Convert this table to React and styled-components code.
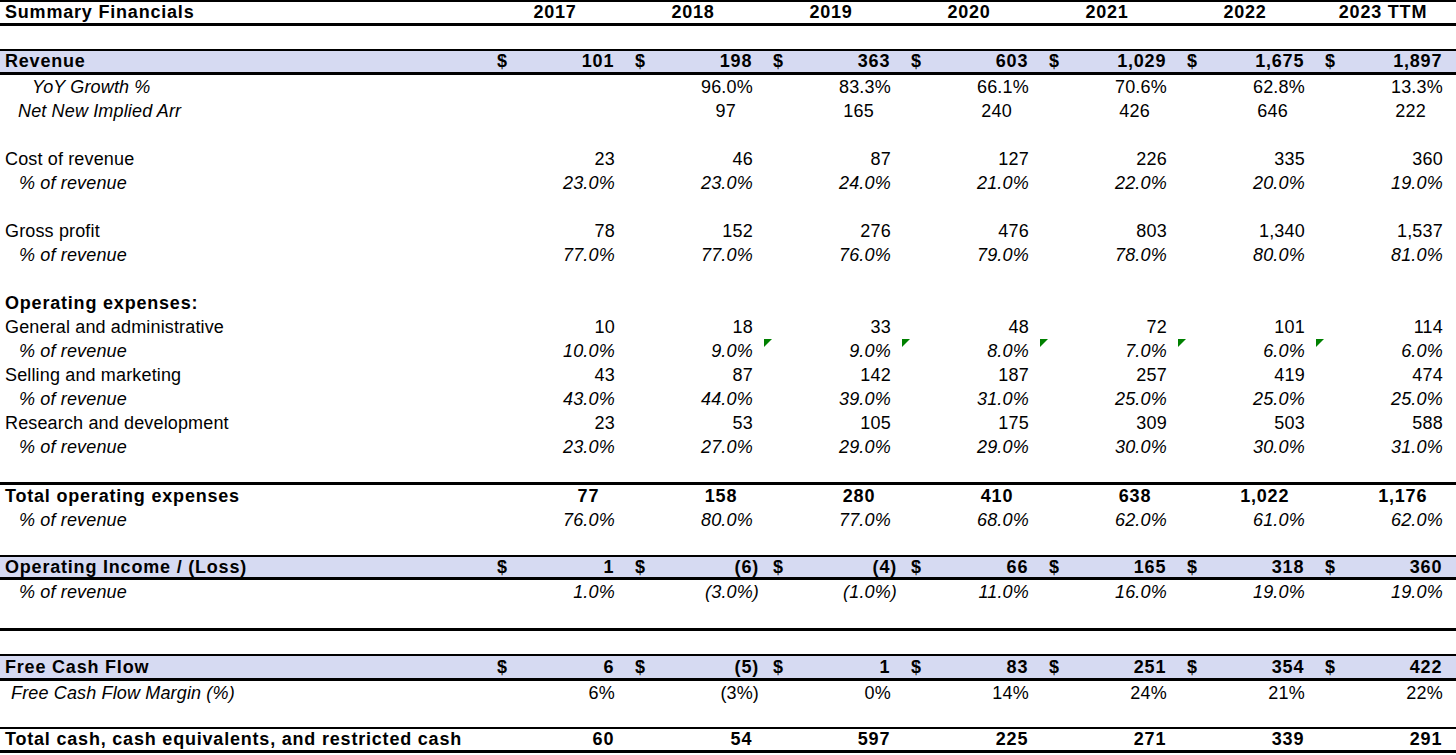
import React from 'react'
import styled, { createGlobalStyle } from 'styled-components'

const years = ['2017', '2018', '2019', '2020', '2021', '2022', '2023 TTM']

// one entry per spreadsheet row; h = row height, top/bottom = border widths
const rows = [
  { type: 'head', h: 26, top: 2, bottom: 3 },
  { type: 'blank', h: 23 },
  { label: 'Revenue', bold: true, band: true, dollar: true, h: 26, top: 2, bottom: 3,
    values: ['101', '198', '363', '603', '1,029', '1,675', '1,897'] },
  { label: 'YoY Growth %', italic: true, indent: 27,
    values: ['', '96.0%', '83.3%', '66.1%', '70.6%', '62.8%', '13.3%'] },
  { label: 'Net New Implied Arr', italic: true, indent: 13, inset: 20,
    values: ['', '97', '165', '240', '426', '646', '222'] },
  { type: 'blank' },
  { label: 'Cost of revenue', values: ['23', '46', '87', '127', '226', '335', '360'] },
  { label: '% of revenue', italic: true, indent: 14, italicValues: true,
    values: ['23.0%', '23.0%', '24.0%', '21.0%', '22.0%', '20.0%', '19.0%'] },
  { type: 'blank' },
  { label: 'Gross profit', values: ['78', '152', '276', '476', '803', '1,340', '1,537'] },
  { label: '% of revenue', italic: true, indent: 14, italicValues: true,
    values: ['77.0%', '77.0%', '76.0%', '79.0%', '78.0%', '80.0%', '81.0%'] },
  { type: 'blank' },
  { label: 'Operating expenses:', bold: true, values: [] },
  { label: 'General and administrative', values: ['10', '18', '33', '48', '72', '101', '114'] },
  { label: '% of revenue', italic: true, indent: 14, italicValues: true, flags: [2, 3, 4, 5, 6],
    values: ['10.0%', '9.0%', '9.0%', '8.0%', '7.0%', '6.0%', '6.0%'] },
  { label: 'Selling and marketing', values: ['43', '87', '142', '187', '257', '419', '474'] },
  { label: '% of revenue', italic: true, indent: 14, italicValues: true,
    values: ['43.0%', '44.0%', '39.0%', '31.0%', '25.0%', '25.0%', '25.0%'] },
  { label: 'Research and development', values: ['23', '53', '105', '175', '309', '503', '588'] },
  { label: '% of revenue', italic: true, indent: 14, italicValues: true,
    values: ['23.0%', '27.0%', '29.0%', '29.0%', '30.0%', '30.0%', '31.0%'] },
  { type: 'blank', h: 23 },
  { label: 'Total operating expenses', bold: true, h: 26, top: 3, inset: 18,
    values: ['77', '158', '280', '410', '638', '1,022', '1,176'] },
  { label: '% of revenue', italic: true, indent: 14, italicValues: true,
    values: ['76.0%', '80.0%', '77.0%', '68.0%', '62.0%', '61.0%', '62.0%'] },
  { type: 'blank', h: 23 },
  { label: 'Operating Income / (Loss)', bold: true, band: true, dollar: true, h: 25, top: 2, bottom: 3,
    values: ['1', '(6)', '(4)', '66', '165', '318', '360'] },
  { label: '% of revenue', italic: true, indent: 14, italicValues: true,
    values: ['1.0%', '(3.0%)', '(1.0%)', '11.0%', '16.0%', '19.0%', '19.0%'] },
  { type: 'blank' },
  { type: 'blank', h: 26, top: 3 },
  { label: 'Free Cash Flow', bold: true, band: true, dollar: true, h: 27, top: 2, bottom: 3,
    values: ['6', '(5)', '1', '83', '251', '354', '422'] },
  { label: 'Free Cash Flow Margin (%)', italic: true, indent: 6,
    values: ['6%', '(3%)', '0%', '14%', '24%', '21%', '22%'] },
  { type: 'blank', h: 22 },
  { label: 'Total cash, cash equivalents, and restricted cash', bold: true, h: 26, top: 2, bottom: 3,
    values: ['60', '54', '597', '225', '271', '339', '291'] },
]

export default function App() {
  return (
    <>
      <GlobalStyle />
      <Sheet>
        {rows.map((row, i) => <SheetRow key={i} row={row} />)}
      </Sheet>
    </>
  )
}

function SheetRow({ row }) {
  const h = row.h || 24
  if (row.type === 'head') {
    return (
      <Row $h={h} $top={row.top} $bottom={row.bottom} $bold>
        <Label>Summary Financials</Label>
        {years.map(y => <YearCell key={y}>{y}</YearCell>)}
      </Row>
    )
  }
  if (row.type === 'blank') {
    return <Row $h={h} $top={row.top} $bottom={row.bottom} />
  }
  return (
    <Row $h={h} $top={row.top} $bottom={row.bottom} $band={row.band} $bold={row.bold}>
      <Label $indent={row.indent} $italic={row.italic}>{row.label}</Label>
      {row.values.map((v, i) => {
        const neg = v.startsWith('(')
        return (
          <Cell key={i} $inset={row.inset} $italic={row.italicValues}>
            {row.flags && row.flags.includes(i) && <Flag />}
            {row.dollar && <Dollar>$</Dollar>}
            {v}
            {v && !neg && <Pad>)</Pad>}
          </Cell>
        )
      })}
    </Row>
  )
}

const GlobalStyle = createGlobalStyle`
  body {
    margin: 0;
    background: #fff;
    color: #000;
    font-family: "Liberation Sans", Arial, sans-serif;
    font-size: 18px;
  }
`

const Sheet = styled.div`
  width: 1456px;
  display: flex;
  flex-direction: column;
`

const Row = styled.div`
  box-sizing: border-box;
  display: grid;
  grid-template-columns: 486px repeat(7, 138px);
  height: ${p => p.$h}px;
  border-top: ${p => p.$top || 0}px solid #000;
  border-bottom: ${p => p.$bottom || 0}px solid #000;
  background: ${p => (p.$band ? '#d6daf2' : 'transparent')};
  font-weight: ${p => (p.$bold ? 700 : 400)};
  letter-spacing: ${p => (p.$bold ? '0.8px' : '0.15px')};
  white-space: nowrap;
`

const Label = styled.div`
  display: flex;
  align-items: center;
  padding-left: ${p => 5 + (p.$indent || 0)}px;
  font-style: ${p => (p.$italic ? 'italic' : 'normal')};
`

const YearCell = styled.div`
  display: flex;
  align-items: center;
  justify-content: center;
`

const Cell = styled.div`
  position: relative;
  display: flex;
  align-items: center;
  justify-content: flex-end;
  padding: 0 ${p => p.$inset || 3}px 0 11px;
  font-style: ${p => (p.$italic ? 'italic' : 'normal')};
`

const Dollar = styled.span`
  margin-right: auto;
`

const Pad = styled.span`
  visibility: hidden;
`

const Flag = styled.span`
  position: absolute;
  top: 0;
  left: 2px;
  width: 0;
  height: 0;
  border-top: 8px solid #008000;
  border-right: 8px solid transparent;
`
